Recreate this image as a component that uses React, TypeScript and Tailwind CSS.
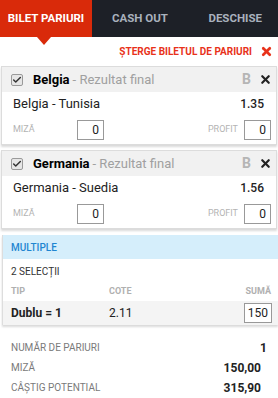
import { Check, X } from 'lucide-react'

const font = { fontFamily: 'Roboto, "Noto Sans", sans-serif' }

function Selection({ team, match, odd }: { team: string; match: string; odd: string }) {
  return (
    <div className="mx-[1px] border border-[#dcdcdc] bg-white shadow-[0_2px_2px_rgba(0,0,0,0.15)]">
      <div className="flex h-[25px] items-center bg-[#f1f1f1] pl-[9px] pr-[4px]">
        <span className="flex h-[12px] w-[12px] items-center justify-center rounded-[2px] border border-[#9a9a9a] bg-[#e6e6e6]">
          <Check size={10} strokeWidth={3.5} className="text-[#333]" />
        </span>
        <span className="ml-[10px] text-[13px] font-bold text-black">{team}</span>
        <span className="ml-[3px] text-[13px] text-[#a0a0a0]">- Rezultat final</span>
        <span className="ml-auto text-[14px] font-bold text-[#b5b5b5]">B</span>
        <X size={13} strokeWidth={4} className="ml-[8px] text-[#222]" />
      </div>
      <div className="flex h-[23px] items-center justify-between pl-[11px] pr-[12px] text-[13px] text-[#222]">
        <span>{match}</span>
        <span className="text-[12px] font-medium">{odd}</span>
      </div>
      <div className="flex h-[29px] items-center pl-[11px] pr-[5px]">
        <span className="w-[64px] text-[9px] text-[#b4b4b4]">MIZĂ</span>
        <div className="flex h-[20px] w-[27px] items-center justify-end border border-[#999] pr-[4px] text-[12px] text-[#222]">0</div>
        <span className="ml-auto text-[9px] text-[#b4b4b4]">PROFIT</span>
        <div className="ml-[6px] flex h-[20px] w-[27px] items-center justify-end border border-[#999] pr-[4px] text-[12px] text-[#222]">0</div>
      </div>
    </div>
  )
}

export default function App() {
  return (
    <div className="h-[398px] w-[278px] overflow-hidden bg-white" style={font}>
      {/* Tabs */}
      <div className="flex h-[37px] bg-[#1d2027] text-[11.5px] font-bold">
        <div className="relative flex w-[92px] items-center justify-center bg-[#d92a0a] text-white">
          BILET PARIURI
          <div className="absolute left-[37px] top-[37px] h-0 w-0 border-x-[7px] border-t-[8px] border-x-transparent border-t-[#d92a0a]" />
        </div>
        <div className="flex w-[96px] items-center justify-center text-[#a9b1bd]">CASH OUT</div>
        <div className="flex flex-1 items-center justify-end pr-[16px] text-[#a9b1bd]">DESCHISE</div>
      </div>

      {/* Clear slip */}
      <div className="flex h-[29px] items-center justify-end gap-[8px] pr-[5px] text-[10px] font-bold text-[#e8321a]">
        <span>ȘTERGE BILETUL DE PARIURI</span>
        <X size={13} strokeWidth={5} />
      </div>

      <div className="flex flex-col gap-[5px]">
        <Selection team="Belgia" match="Belgia - Tunisia" odd="1.35" />
        <Selection team="Germania" match="Germania - Suedia" odd="1.56" />
      </div>

      {/* Multiple */}
      <div className="mt-[6px] ml-[2px] border-l border-[#ddd] shadow-[0_2px_2px_rgba(0,0,0,0.15)]">
        <div className="flex h-[24px] items-center bg-[#d5eefb] pl-[8px] text-[10px] font-medium text-[#1f86d1]">MULTIPLE</div>
        <div className="flex h-[24px] items-center pl-[8px] text-[10px] text-[#333]">2 SELECȚII</div>
        <div className="flex h-[18px] items-center pl-[8px] pr-[7px] text-[9px] font-bold text-[#b0b0b0]">
          <span className="w-[98px]">TIP</span>
          <span>COTE</span>
          <span className="ml-auto">SUMĂ</span>
        </div>
        <div className="flex h-[24px] items-center bg-[#f4f4f4] pl-[8px] pr-[6px] text-[12px] text-[#222]">
          <span className="w-[98px] font-bold">Dublu = 1</span>
          <span>2.11</span>
          <div className="ml-auto flex h-[20px] w-[28px] items-center justify-end border border-[#999] bg-white pr-[3px]">150</div>
        </div>
      </div>

      {/* Summary */}
      <div className="mt-[14px] flex flex-col gap-[3px] pl-[11px] pr-[17px]">
        <div className="flex h-[17px] items-center justify-between">
          <span className="text-[10px] text-[#7a7a7a]">NUMĂR DE PARIURI</span>
          <span className="-mr-[6px] text-[12px] font-bold text-[#222]">1</span>
        </div>
        <div className="flex h-[17px] items-center justify-between">
          <span className="text-[10px] text-[#7a7a7a]">MIZĂ</span>
          <span className="text-[12px] font-bold text-[#222]">150,00</span>
        </div>
        <div className="flex h-[17px] items-center justify-between">
          <span className="text-[10px] text-[#7a7a7a]">CÂȘTIG POTENTIAL</span>
          <span className="text-[12px] font-bold text-[#222]">315,90</span>
        </div>
      </div>
    </div>
  )
}
